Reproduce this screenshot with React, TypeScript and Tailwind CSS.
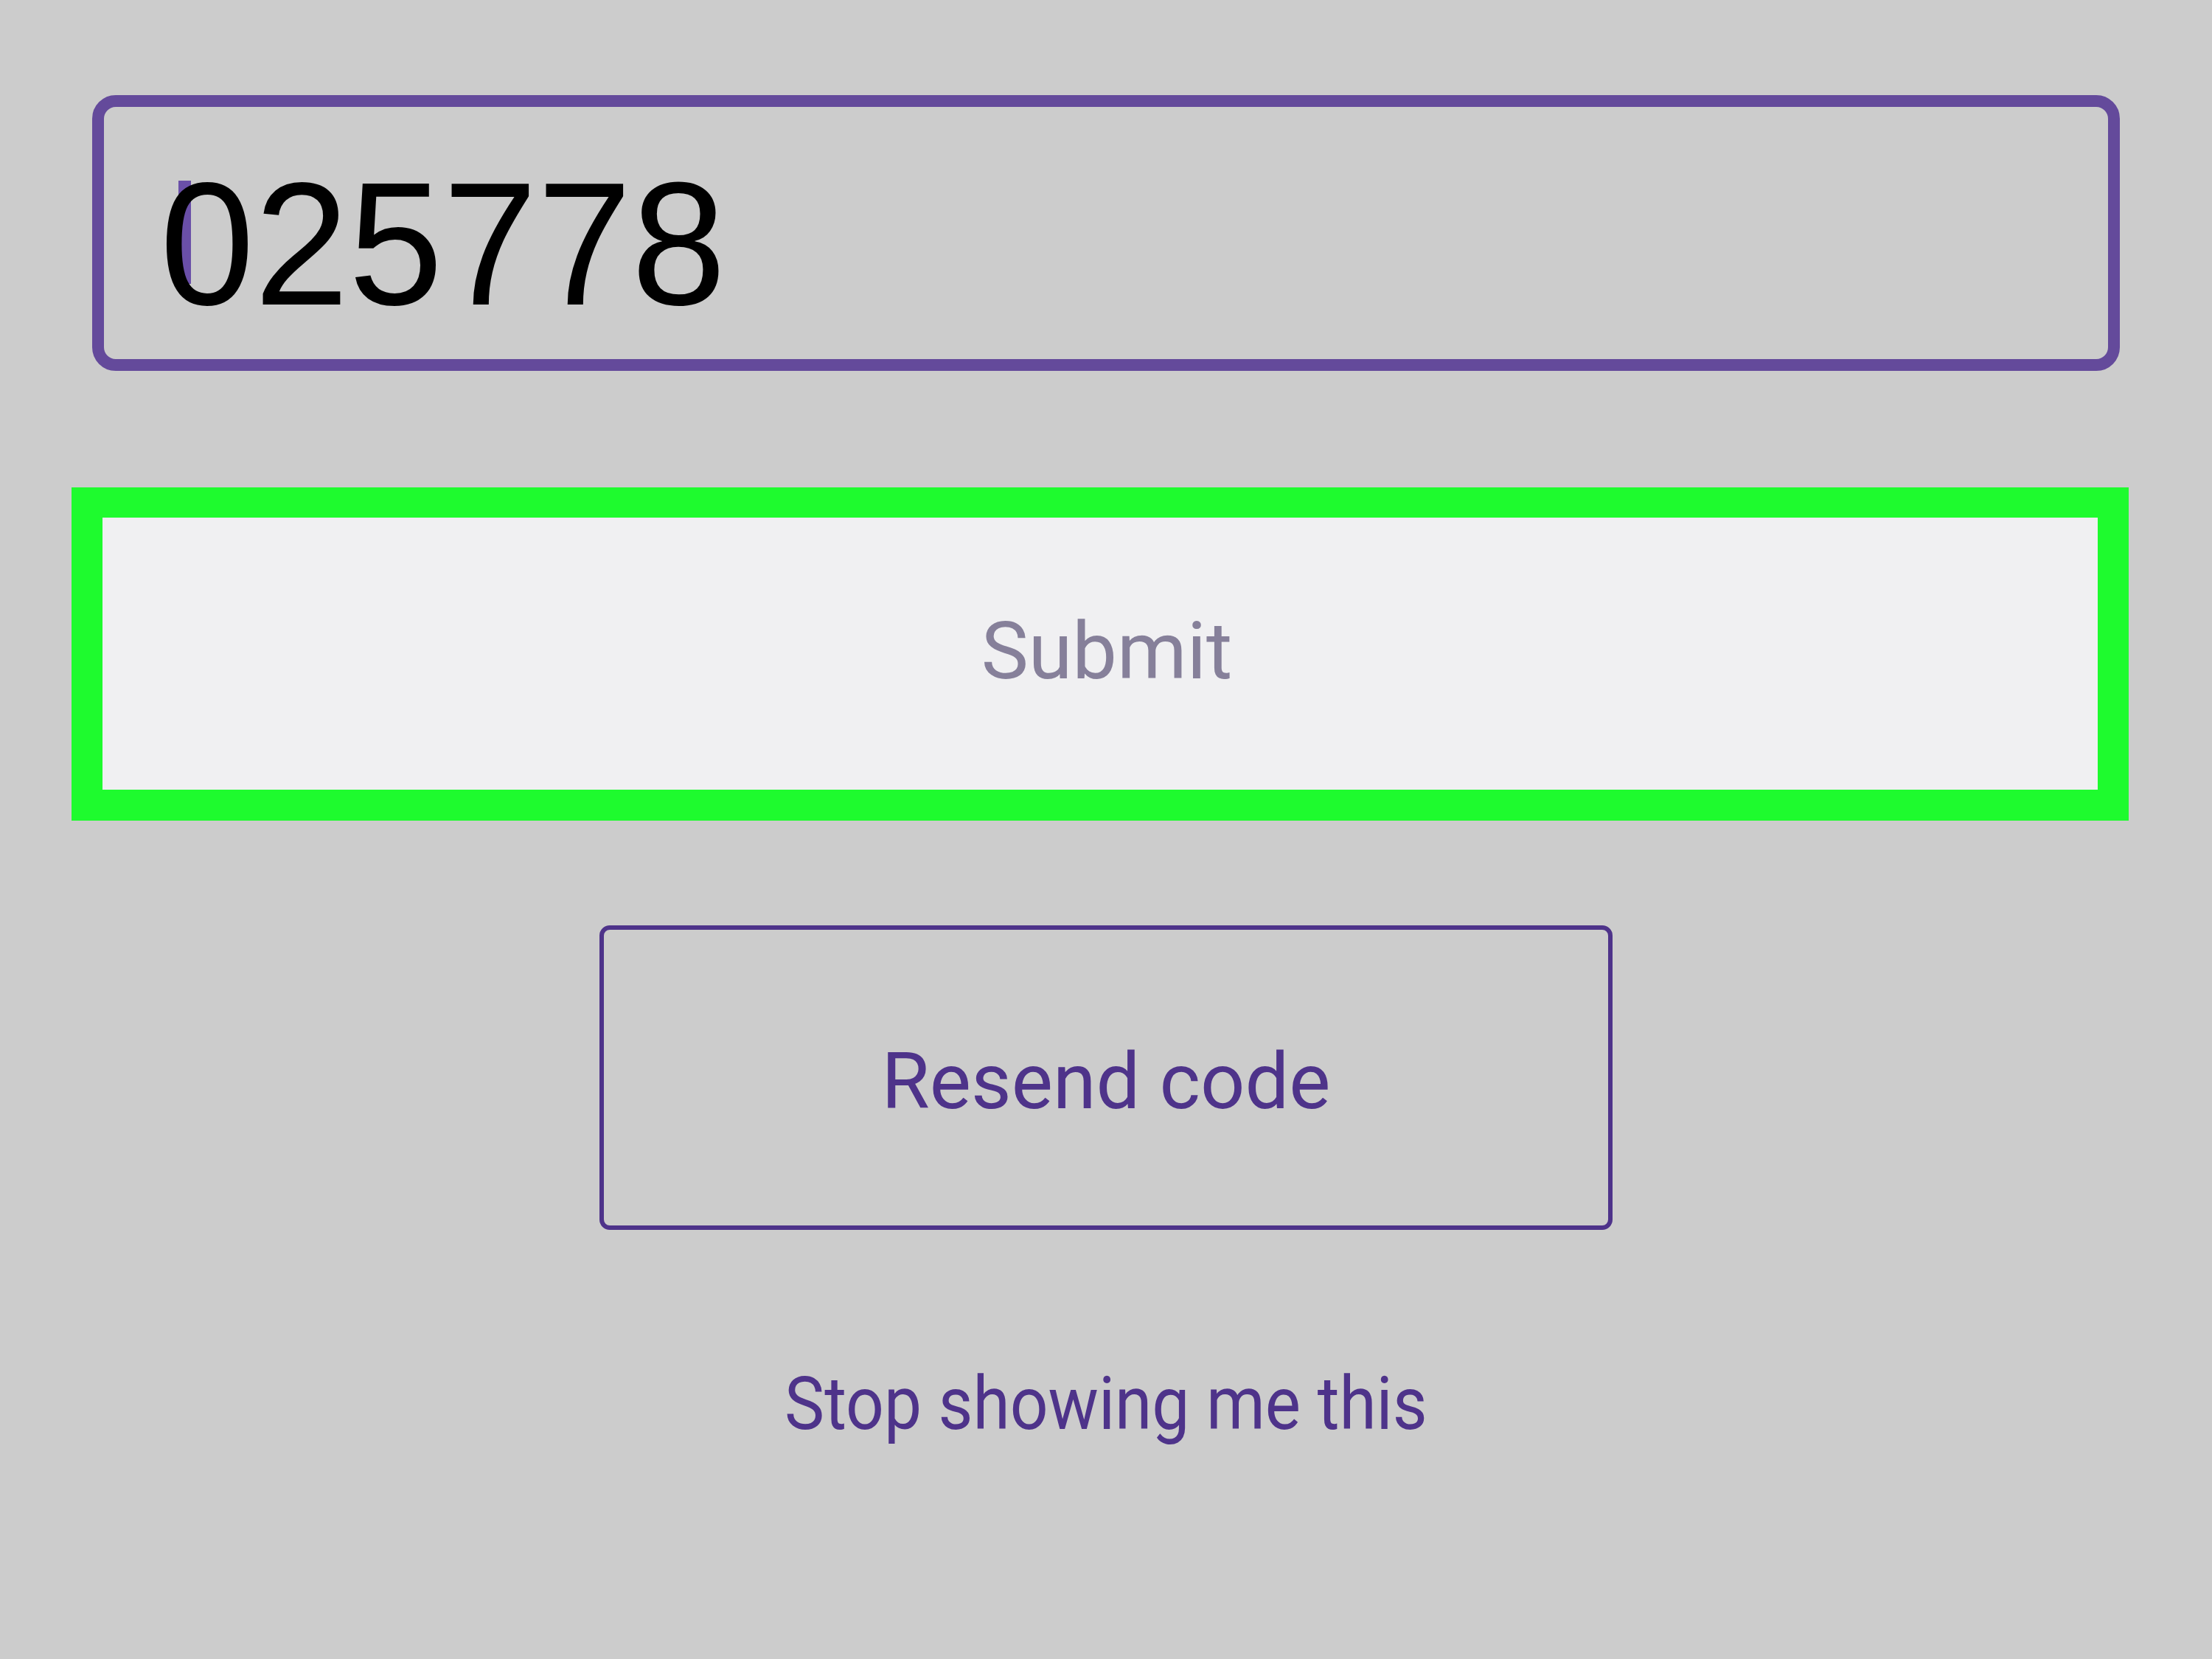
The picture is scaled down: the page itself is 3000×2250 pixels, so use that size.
import React from "react";

const roboto = { fontFamily: "Roboto, 'Noto Sans', sans-serif" };

export default function App() {
  return (
    <div
      className="w-[3000px] h-[2250px] bg-[#cccccc] flex flex-col items-start pt-[129px] overflow-hidden"
      style={roboto}
    >
      {/* code input */}
      <div className="relative ml-[125px] w-[2750px] h-[374px] box-border border-[16px] border-[#644a9b] rounded-[32px] pl-[76px] pt-[68px]">
        <div className="absolute left-[101px] top-[100px] w-[17px] h-[140px] bg-[#6a4fa8]" />
        <div
          className="relative text-[230px] leading-none text-black origin-top scale-y-[1.03]"
          style={{ fontFamily: "'Liberation Sans', Arial, sans-serif" }}
        >
          025778
        </div>
      </div>

      {/* submit, highlighted */}
      <div className="ml-[97px] mt-[158px] w-[2790px] h-[452px] box-border border-[42px] border-t-[41px] border-[#1efb2e] bg-[#f0f0f2] flex items-center justify-center">
        <span className="text-[108px] leading-none text-[#86809a] ml-[18px] mt-[-8px]">Submit</span>
      </div>

      {/* resend */}
      <div className="self-center mt-[142px] w-[1374px] h-[413px] box-border border-[6px] border-[#4e338a] rounded-[14px] flex items-center justify-center">
        <span className="text-[106px] leading-none text-[#4e338a] mt-[10px]">Resend code</span>
      </div>

      <div className="self-center mt-[186px] text-[100px] leading-none text-[#4e338a] scale-x-[0.91]">
        Stop showing me this
      </div>
    </div>
  );
}
